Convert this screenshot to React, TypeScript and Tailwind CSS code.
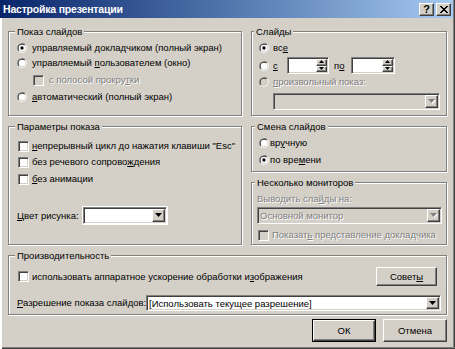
import type { ReactNode } from "react"

const sunken =
  "border border-t-[#808080] border-l-[#808080] border-r-white border-b-white shadow-[inset_1px_1px_0_#404040,inset_-1px_-1px_0_#d4d0c8]"
const raised =
  "border border-t-white border-l-white border-r-[#404040] border-b-[#404040] shadow-[inset_-1px_-1px_0_#808080]"
const dim = "text-[#808080] [text-shadow:1px_1px_0_#fff]"

function Radio({ checked = false, disabled = false }: { checked?: boolean; disabled?: boolean }) {
  return (
    <svg width="10" height="10" viewBox="0 0 12 12" className="shrink-0">
      <path d="M1.76 10.24A6 6 0 0 1 10.24 1.76Z" fill="#808080" />
      <path d="M1.76 10.24A6 6 0 0 0 10.24 1.76Z" fill="#fff" />
      <path d="M2.46 9.54A5 5 0 0 1 9.54 2.46Z" fill="#404040" />
      <path d="M2.46 9.54A5 5 0 0 0 9.54 2.46Z" fill="#d4d0c8" />
      <circle cx="6" cy="6" r="4" fill={disabled ? "#d4d0c8" : "#fff"} />
      {checked && <circle cx="6" cy="6" r="2" fill="#000" />}
    </svg>
  )
}

function Check({ disabled = false }: { disabled?: boolean }) {
  return (
    <span
      className={`block w-[11px] h-[11px] shrink-0 ${sunken} ${disabled ? "bg-[#d4d0c8]" : "bg-white"}`}
    />
  )
}

function Arrow({ disabled = false, up = false, small = false }: { disabled?: boolean; up?: boolean; small?: boolean }) {
  const w = small ? 5 : 7
  const h = small ? 3 : 4
  const d = up ? `M0 ${h}H${w}L${w / 2} 0Z` : `M0 0H${w}L${w / 2} ${h}Z`
  return (
    <svg width={w + 1} height={h + 1} viewBox={`0 0 ${w + 1} ${h + 1}`}>
      {disabled && <path d={d} fill="#fff" transform="translate(1 1)" />}
      <path d={d} fill={disabled ? "#808080" : "#000"} />
    </svg>
  )
}

function Combo({ value = "", disabled = false, className = "" }: { value?: string; disabled?: boolean; className?: string }) {
  return (
    <div className={`flex ${sunken} ${disabled ? "bg-[#d4d0c8]" : "bg-white"} ${className}`}>
      <div className={`flex-1 flex items-center pl-[2px] pt-[1px] overflow-hidden whitespace-nowrap ${disabled ? dim : ""}`}>
        {value}
      </div>
      <div className={`w-[13px] my-[1px] mr-[1px] bg-[#d4d0c8] flex items-center justify-center ${raised}`}>
        <Arrow disabled={disabled} />
      </div>
    </div>
  )
}

function Spinner({ className = "" }: { className?: string }) {
  return (
    <div className={`flex h-[17px] bg-white ${sunken} ${className}`}>
      <div className="flex-1" />
      <div className="w-[11px] my-[1px] mr-[1px] flex flex-col">
        <div className={`flex-1 bg-[#d4d0c8] flex items-center justify-center ${raised}`}>
          <Arrow up small />
        </div>
        <div className={`flex-1 bg-[#d4d0c8] flex items-center justify-center ${raised}`}>
          <Arrow small />
        </div>
      </div>
    </div>
  )
}

function Group({
  label,
  labelLeft = "left-[6px]",
  className = "",
  children,
}: {
  label: ReactNode
  labelLeft?: string
  className?: string
  children: ReactNode
}) {
  return (
    <div
      className={`relative flex flex-col border border-[#808080] shadow-[inset_1px_1px_0_#fff,1px_1px_0_#fff] ${className}`}
    >
      <span className={`absolute top-[-7px] ${labelLeft} px-[2px] bg-[#d4d0c8] leading-[13px] whitespace-nowrap`}>
        {label}
      </span>
      {children}
    </div>
  )
}

function Row({ className = "", children }: { className?: string; children: ReactNode }) {
  return <div className={`flex items-center h-[14px] whitespace-nowrap ${className}`}>{children}</div>
}

export default function App() {
  return (
    <div className="w-[455px] h-[349px] bg-[#d4d0c8] flex flex-col overflow-hidden font-['Liberation_Sans',Arial,sans-serif] text-[9.5px] leading-[12px] text-black shadow-[inset_2px_0_0_#fff,inset_0_-1px_0_#404040,inset_0_-2px_0_#808080,inset_-1px_0_0_#404040,inset_-2px_0_0_#808080]">
      {/* title bar */}
      <div className="h-[18px] mr-[2px] flex items-center pl-[3px] pr-[2px] bg-linear-to-r from-[#0a246a] to-[#a6caf0]">
        <span className="text-white font-bold text-[10.5px] tracking-[-0.2px]">Настройка презентации</span>
        <div className="ml-auto flex gap-[2px]">
          <div className={`w-[15px] h-[13px] bg-[#d4d0c8] flex items-center justify-center font-bold text-[11px] leading-none ${raised}`}>
            ?
          </div>
          <div className={`w-[15px] h-[13px] bg-[#d4d0c8] flex items-center justify-center ${raised}`}>
            <svg width="8" height="7" viewBox="0 0 8 7">
              <path d="M0 0L7 7M7 0L0 7M1 0L8 7M8 0L1 7" stroke="#000" strokeWidth="1" />
            </svg>
          </div>
        </div>
      </div>

      <div className="flex flex-col px-[8px]">
        {/* row 1 */}
        <div className="flex gap-[9px] mt-[13px]">
          <Group label="Показ слайдов" className="w-[234px] h-[85px] pt-[9px] pl-[8px]">
            <Row className="gap-[5px]">
              <Radio checked />
              <span>
                управляемый <u>д</u>окладчиком (полный экран)
              </span>
            </Row>
            <Row className="gap-[5px] mt-[1px]">
              <Radio />
              <span>
                управляемый <u>п</u>ользователем (окно)
              </span>
            </Row>
            <Row className="gap-[5px] mt-[3px] ml-[16px]">
              <Check disabled />
              <span className={dim}>
                с полосой прокру<u>т</u>ки
              </span>
            </Row>
            <Row className="gap-[5px] mt-[3px]">
              <Radio />
              <span>
                <u>а</u>втоматический (полный экран)
              </span>
            </Row>
          </Group>

          <Group label="Слайды" labelLeft="left-[2px]" className="flex-1 h-[85px] pt-[9px] pl-[7px]">
            <Row className="gap-[4px]">
              <Radio checked />
              <span>
                вс<u>е</u>
              </span>
            </Row>
            <div className="flex items-center h-[17px] mt-[2px]">
              <Radio />
              <span className="w-[14px] ml-[4px]">
                <u>с</u>
              </span>
              <Spinner className="w-[42px]" />
              <span className="w-[17px] ml-[5px]">
                п<u>о</u>
              </span>
              <Spinner className="w-[44px]" />
            </div>
            <Row className="gap-[4px] mt-[1px]">
              <Radio disabled />
              <span className={dim}>
                <u>п</u>роизвольный показ:
              </span>
            </Row>
            <Combo disabled className="ml-[14px] mt-[4px] w-[167px] h-[17px]" />
          </Group>
        </div>

        {/* row 2 */}
        <div className="flex gap-[9px] mt-[10px]">
          <Group label="Параметры показа" className="w-[234px] h-[119px] pt-[12px] pl-[9px]">
            <Row className="gap-[3px]">
              <Check />
              <span>
                <u>н</u>епрерывный цикл до нажатия клавиши "Esc"
              </span>
            </Row>
            <Row className="gap-[3px] mt-[2px]">
              <Check />
              <span>
                без речевого сопрово<u>ж</u>дения
              </span>
            </Row>
            <Row className="gap-[3px] mt-[3px]">
              <Check />
              <span>
                <u>б</u>ез анимации
              </span>
            </Row>
            <div className="flex items-center h-[17px] mt-[21px] -ml-[1px]">
              <span className="w-[66px]">
                <u>Ц</u>вет рисунка:
              </span>
              <Combo className="w-[84px] h-[17px] outline outline-1 outline-white" />
            </div>
          </Group>

          <div className="flex-1 flex flex-col">
            <Group label="Смена слайдов" labelLeft="left-[3px]" className="h-[46px] pt-[9px] pl-[7px]">
              <Row className="gap-[1px]">
                <Radio />
                <span>
                  вр<u>у</u>чную
                </span>
              </Row>
              <Row className="gap-[1px] mt-[3px]">
                <Radio checked />
                <span>
                  по вре<u>м</u>ени
                </span>
              </Row>
            </Group>
            <Group
              label="Несколько мониторов"
              labelLeft="left-[3px]"
              className="h-[63px] mt-[10px] pt-[9px] pl-[5px]"
            >
              <Row>
                <span className={dim}>
                  Выводить сла<u>й</u>ды на:
                </span>
              </Row>
              <Combo disabled value="Основной монитор" className="w-[185px] h-[17px] mt-[1px]" />
              <Row className="gap-[3px] mt-[4px] ml-[1px]">
                <Check disabled />
                <span className={dim}>
                  Показат<u>ь</u> представление докладчика
                </span>
              </Row>
            </Group>
          </div>
        </div>

        {/* row 3 */}
        <Group label="Производительность" className="h-[60px] mt-[10px] pt-[11px] pl-[9px]">
          <div className="flex items-center h-[19px] whitespace-nowrap">
            <Check />
            <span className="ml-[3px]">
              использовать аппаратное ускорение обработки и<u>з</u>ображения
            </span>
            <div
              className={`ml-auto mr-[9px] w-[61px] h-[19px] bg-[#d4d0c8] flex items-center justify-center ${raised}`}
            >
              <span>
                Совет<u>ы</u>
              </span>
            </div>
          </div>
          <div className="flex items-center h-[16px] mt-[9px] -ml-[1px] whitespace-nowrap">
            <span className="w-[129px]">
              <u>Р</u>азрешение показа слайдов:
            </span>
            <Combo value="[Использовать текущее разрешение]" className="w-[295px] h-[16px]" />
          </div>
        </Group>

        {/* buttons */}
        <div className="flex justify-end gap-[7px] mt-[4px]">
          <div className="w-[64px] h-[23px] border border-black">
            <div className={`h-full bg-[#d4d0c8] flex items-center justify-center ${raised}`}>ОК</div>
          </div>
          <div className={`w-[64px] h-[23px] bg-[#d4d0c8] flex items-center justify-center ${raised}`}>Отмена</div>
        </div>
      </div>
    </div>
  )
}
